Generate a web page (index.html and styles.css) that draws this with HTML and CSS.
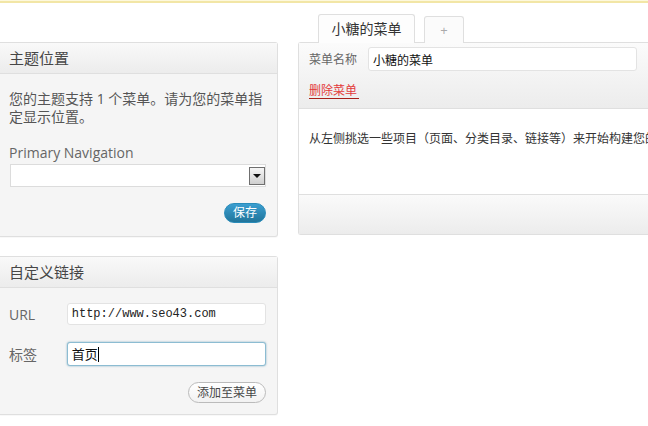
FILE: index.html
```html
<!DOCTYPE html>
<html lang="zh-CN">
<head>
  <meta charset="UTF-8" />
  <title>菜单</title>
  <link rel="stylesheet" href="styles.css">
</head>
<body>

<div class="notice"></div>

<div class="wrap">
  <div class="sidebar">
    <div class="panel">
      <h3 class="panel-head">主题位置</h3>
      <div class="panel-body">
        <p>您的主题支持 1 个菜单。请为您的菜单指定显示位置。</p>
        <label class="loc-label">Primary Navigation</label>
        <div class="select">
          <span class="select-arrow"></span>
        </div>
        <div class="actions">
          <button class="btn-primary">保存</button>
        </div>
      </div>
    </div>

    <div class="panel panel-links">
      <h3 class="panel-head">自定义链接</h3>
      <div class="panel-body links-body">
        <div class="field">
          <label>URL</label>
          <input type="text" class="url-input" value="http://www.seo43.com" />
        </div>
        <div class="field field-label">
          <label>标签</label>
          <div class="text-input focused">首页<span class="caret"></span></div>
        </div>
        <div class="actions actions-add">
          <button class="btn-secondary">添加至菜单</button>
        </div>
      </div>
    </div>
  </div>

  <div class="main">
    <div class="tabs">
      <span class="tab active">小糖的菜单</span>
      <span class="tab tab-add">+</span>
    </div>
    <div class="menu-panel">
      <div class="menu-head">
        <div class="name-row">
          <label>菜单名称</label>
          <input type="text" class="name-input" value="小糖的菜单" />
        </div>
        <a href="#" class="delete">删除菜单</a>
      </div>
      <div class="menu-body">
        <p>从左侧挑选一些项目（页面、分类目录、链接等）来开始构建您的自定义菜单。</p>
      </div>
      <div class="menu-foot"></div>
    </div>
  </div>
</div>

</body>
</html>
```

FILE: styles.css
```css
body {
  margin: 0;
  font-family: "Open Sans", "Noto Sans CJK SC", sans-serif;
  background: #fff;
  color: #333;
  width: 648px;
  height: 426px;
  overflow: hidden;
}

.notice {
  height: 1px;
  background: #fdf8dc;
  border-bottom: 2px solid #f2e6a6;
}

.wrap {
  display: flex;
  align-items: flex-start;
  gap: 20px;
}

/* Left column */
.sidebar {
  width: 278px;
  flex: none;
  padding-top: 39px;
}

.panel {
  border: 1px solid #dfdfdf;
  border-left: none;
  border-radius: 0 3px 3px 0;
  background: #f5f5f5;
  box-shadow: 0 1px 1px rgba(0, 0, 0, 0.03);
}

.panel-links {
  margin-top: 19px;
}

.panel-head {
  margin: 0;
  height: 30px;
  line-height: 30px;
  padding: 0 9px;
  font-size: 15px;
  font-weight: normal;
  color: #464646;
  background: linear-gradient(#f9f9f9, #ececec);
  border-bottom: 1px solid #dfdfdf;
}

.panel-body {
  padding: 16px 11px 13px 9px;
}

.panel-body p {
  margin: 0;
  font-size: 14px;
  line-height: 18px;
  color: #555;
}

.loc-label {
  display: block;
  margin-top: 18px;
  font-size: 14px;
  line-height: 18px;
  color: #666;
}

.select {
  position: relative;
  margin: 2px 0 0 1px;
  height: 21px;
  border: 1px solid #dcdcdc;
  background: #fff;
}

.select-arrow {
  position: absolute;
  right: 0;
  top: 2px;
  width: 14px;
  height: 16px;
  border: 1px solid #6f6f6f;
  background: linear-gradient(#f6f6f6, #cfcfcf);
}

.select-arrow::after {
  content: "";
  position: absolute;
  left: 3px;
  top: 6px;
  border-left: 4px solid transparent;
  border-right: 4px solid transparent;
  border-top: 4px solid #111;
}

.actions {
  margin-top: 16px;
  text-align: right;
  line-height: 0;
}

.btn-primary {
  width: 42px;
  height: 20px;
  padding: 0;
  border: 1px solid #298cba;
  border-radius: 11px;
  background: linear-gradient(#3b9ed0, #21759b);
  color: #fff;
  font-family: inherit;
  font-size: 12px;
  line-height: 18px;
}

/* Custom links */
.links-body {
  padding-top: 15px;
  padding-bottom: 11px;
}

.field {
  display: flex;
  align-items: center;
}

.field label {
  width: 58px;
  font-size: 14px;
  color: #666;
}

.field-label {
  margin-top: 17px;
}

.url-input,
.text-input {
  box-sizing: border-box;
  width: 200px;
  height: 22px;
  padding: 0 4px;
  border: 1px solid #e3e3e3;
  border-radius: 3px;
  background: #fff;
  font-family: "Liberation Mono", monospace;
  font-size: 12px;
  color: #222;
}

.text-input {
  height: 24px;
  line-height: 22px;
  font-family: "Noto Sans CJK SC", sans-serif;
  font-size: 13px;
  color: #111;
}

.focused {
  border-color: #8cbcd2;
  box-shadow: 0 0 2px rgba(33, 117, 155, 0.6);
}

.caret {
  display: inline-block;
  width: 1px;
  height: 15px;
  background: #000;
  vertical-align: -3px;
}

.actions-add {
  margin-top: 16px;
}

.btn-secondary {
  width: 78px;
  height: 21px;
  padding: 0;
  border: 1px solid #bbb;
  border-radius: 11px;
  background: linear-gradient(#fff, #f2f2f2);
  color: #464646;
  font-family: inherit;
  font-size: 12px;
  line-height: 19px;
}

/* Right column */
.main {
  flex: none;
  width: 400px;
  padding-top: 12px;
}

.tabs {
  display: flex;
  align-items: flex-end;
  padding-left: 20px;
  height: 28px;
  margin-bottom: -1px;
  position: relative;
}

.tab {
  box-sizing: border-box;
  height: 28px;
  line-height: 27px;
  text-align: center;
  border: 1px solid #dfdfdf;
  border-bottom: none;
  border-radius: 3px 3px 0 0;
  background: #fff;
  font-size: 14px;
  color: #333;
}

.tab.active {
  width: 97px;
  height: 29px;
  background: #fdfdfd;
}

.tab-add {
  width: 40px;
  margin-left: 9px;
  height: 27px;
  color: #aaa;
  font-size: 13px;
  background: #fbfbfb;
}

.menu-panel {
  border: 1px solid #dfdfdf;
  border-right: none;
  border-radius: 3px 0 0 3px;
  background: #fff;
}

.menu-head {
  height: 66px;
  padding: 4px 0 0 10px;
  box-sizing: border-box;
  background: linear-gradient(#fbfbfb, #ececec);
  border-bottom: 1px solid #dfdfdf;
}

.name-row {
  display: flex;
  align-items: center;
}

.name-row label {
  width: 59px;
  font-size: 12px;
  color: #666;
}

.name-input {
  box-sizing: border-box;
  width: 269px;
  height: 24px;
  padding: 0 4px;
  border: 1px solid #e3e3e3;
  border-radius: 3px;
  background: #fff;
  font-family: "Noto Sans CJK SC", sans-serif;
  font-size: 12px;
  color: #111;
}

.delete {
  display: inline-block;
  margin-top: 12px;
  font-size: 12px;
  line-height: 15px;
  color: #e33b3b;
  text-decoration: none;
  border-bottom: 1px solid #a8201a;
  padding-right: 2px;
}

.menu-body {
  height: 85px;
  padding: 22px 0 0 10px;
  box-sizing: border-box;
}

.menu-body p {
  margin: 0;
  font-size: 12px;
  line-height: 16px;
  color: #333;
  white-space: nowrap;
}

.menu-foot {
  height: 39px;
  border-top: 1px solid #dfdfdf;
  background: linear-gradient(#fafafa, #ececec);
}
```
